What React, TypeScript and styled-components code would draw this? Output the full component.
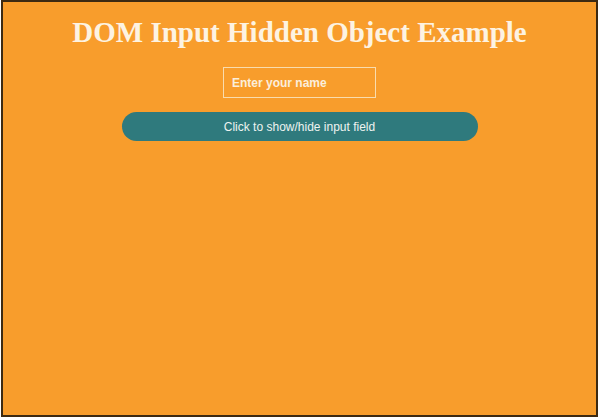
import React from "react";
import styled, { createGlobalStyle } from "styled-components";

const Global = createGlobalStyle`
  html, body { margin: 0; padding: 0; background: #ffffff; }
  #root { padding: 0 0 0 1px; }
`;

const Frame = styled.div`
  box-sizing: border-box;
  width: 597px;
  height: 417px;
  border: 2px solid #3d2a12;
  background: #f89d2c;
  display: flex;
  flex-direction: column;
  align-items: center;
  padding-top: 14px;
`;

const Title = styled.h1`
  margin: 0;
  font-family: "Liberation Serif", "Times New Roman", serif;
  font-weight: bold;
  font-size: 29px;
  line-height: 32px;
  color: #fdf3e2;
`;

const NameInput = styled.input`
  box-sizing: border-box;
  margin-top: 19px;
  width: 153px;
  height: 31px;
  padding: 0 8px;
  background: transparent;
  border: 1px solid #f9dcae;
  outline: none;
  font-family: "Liberation Sans", Arial, sans-serif;
  font-size: 12px;
  font-weight: bold;
  color: #fdf3e2;
  &::placeholder { color: #fbeedb; opacity: 1; }
`;

const ToggleButton = styled.button`
  box-sizing: border-box;
  margin-top: 14px;
  width: 356px;
  height: 29px;
  border: none;
  border-radius: 15px;
  background: #2f7a7d;
  color: #eef3f0;
  font-family: "Liberation Sans", Arial, sans-serif;
  font-size: 12px;
  cursor: pointer;
`;

export default function App() {
  return (
    <>
      <Global />
      <Frame>
        <Title>DOM Input Hidden Object Example</Title>
        <NameInput type="text" placeholder="Enter your name" />
        <ToggleButton>Click to show/hide input field</ToggleButton>
      </Frame>
    </>
  );
}
